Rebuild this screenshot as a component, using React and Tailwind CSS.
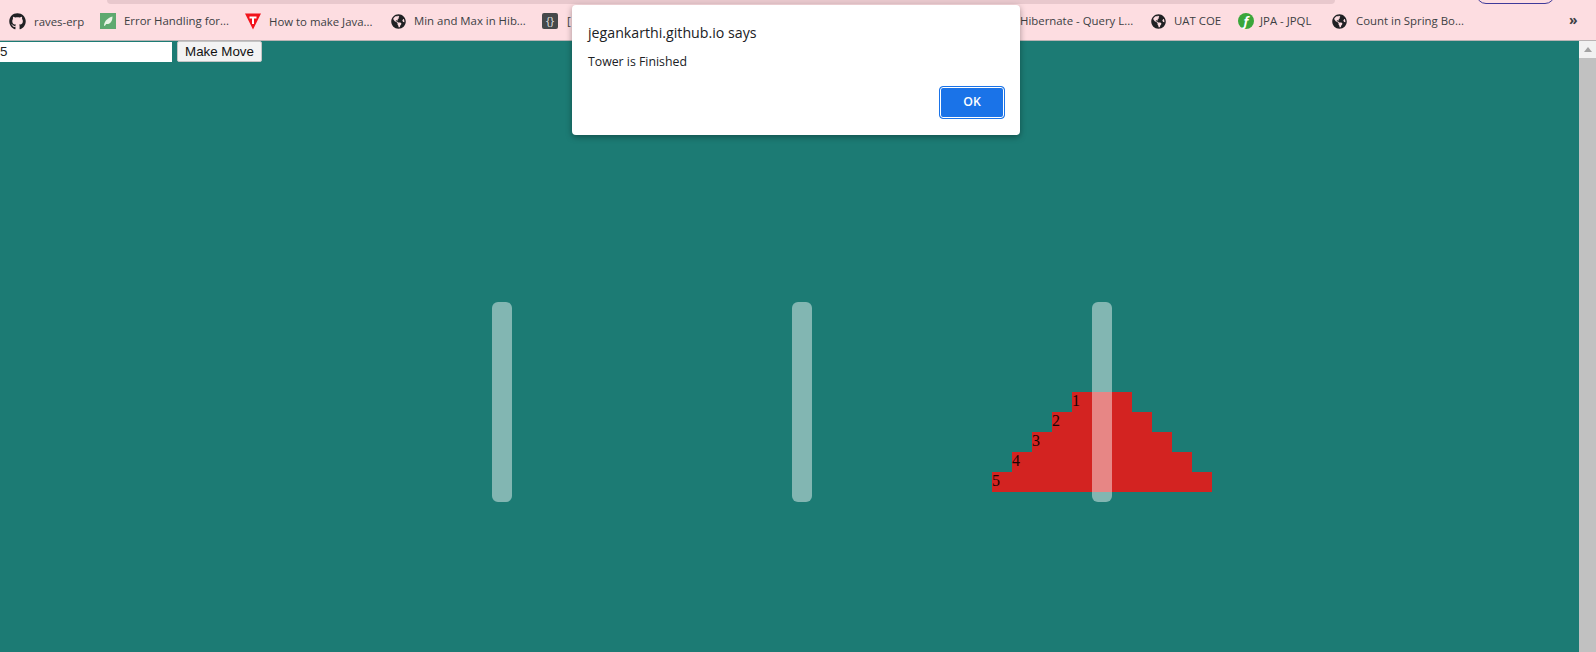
import React from "react";
import { FaGithub, FaGlobeAmericas } from "react-icons/fa";

function LeafIcon() {
  return (
    <svg width="16" height="16" viewBox="0 0 16 16" className="shrink-0">
      <rect width="16" height="16" fill="#5fa96f" />
      <path d="M4 12.5 C4.5 7.5 8 5 12.5 3.5 C12.5 8 10.5 11.5 6.2 11 L4.8 13 Z" fill="#eaf5e6" />
    </svg>
  );
}

function TriIcon() {
  return (
    <svg width="16" height="17" viewBox="0 0 16 17" className="shrink-0">
      <path d="M0 0.5 H16 L8 16.5 Z" fill="#f2141c" />
      <path d="M4.5 3.5 H11.5 V5.5 H9 V11 H7 V5.5 H4.5 Z" fill="#fff" />
    </svg>
  );
}

function Braces() {
  return (
    <span className="w-4 h-4 shrink-0 rounded-[2px] bg-[#46484a] text-[#e4e4e4] text-[11px] leading-4 text-center">
      {"{}"}
    </span>
  );
}

function FIcon() {
  return (
    <span className="w-4 h-4 shrink-0 rounded-full bg-[#3aa63a] text-white text-[13px] font-bold italic leading-4 text-center">
      f
    </span>
  );
}

const globe = <FaGlobeAmericas className="w-[15px] h-[15px] shrink-0 text-[#202124]" />;

const BOOKMARKS = [
  { w: "w-[91px]", icon: <FaGithub className="w-[17px] h-[17px] shrink-0 text-[#202124]" />, label: "raves-erp", gap: "gap-2" },
  { w: "w-[145px]", icon: <LeafIcon />, label: "Error Handling for..." },
  { w: "w-[146px]", icon: <TriIcon />, label: "How to make Java..." },
  { w: "w-[151px]", icon: globe, label: "Min and Max in Hib...", gap: "gap-2" },
  { w: "w-[478px]", icon: <Braces />, label: "[", gap: "gap-[9px]" },
  { w: "w-[131px]", icon: null, label: "Hibernate - Query L..." },
  { w: "w-[87px]", icon: globe, label: "UAT COE", gap: "gap-2" },
  { w: "w-[94px]", icon: <FIcon />, label: "JPA - JPQL", gap: "gap-[6px]" },
  { w: "w-[220px]", icon: globe, label: "Count in Spring Bo...", gap: "gap-[9px]" },
];

// disk sizes, smallest on top
const DISKS = [
  { n: 1, w: "w-[60px]" },
  { n: 2, w: "w-[100px]" },
  { n: 3, w: "w-[140px]" },
  { n: 4, w: "w-[180px]" },
  { n: 5, w: "w-[220px]" },
];

function Tower({ disks }) {
  return (
    <div className="relative w-[300px] h-[200px] flex flex-col items-center justify-end pb-[10px]">
      {disks.map((d) => (
        <div key={d.n} className={`${d.w} h-5 bg-[#d32321] text-[#1a0505] text-[16px] leading-[18px] font-['Liberation_Serif',serif]`}>
          {d.n}
        </div>
      ))}
      <div className="absolute top-0 bottom-0 left-1/2 -translate-x-1/2 w-5 rounded-[6px] bg-white/45" />
    </div>
  );
}

export default function App() {
  return (
    <div className="relative w-[1596px] h-[652px] overflow-hidden flex flex-col bg-[#1c7b74] font-['Open_Sans',sans-serif]">
      {/* browser bookmarks bar */}
      <div className="relative h-[41px] shrink-0 bg-[#fddde1] border-b border-[#b9b3b4] flex items-start pl-[9px] pt-[13px] text-[11.4px] leading-4 text-[#3c4043]">
        <div className="absolute left-[107px] top-0 w-[1228px] h-1 rounded-b-lg bg-[#e8c8cd]" />
        <div className="absolute left-[1476px] -top-4 w-[79px] h-5 rounded-full border border-[#3f3a9a] bg-[#fddde1]" />
        {BOOKMARKS.map((b) => (
          <div key={b.label} className={`${b.w} shrink-0 flex items-center ${b.gap || "gap-[8px]"} whitespace-nowrap`}>
            {b.icon}
            <span>{b.label}</span>
          </div>
        ))}
        <span className="absolute left-[1569px] top-[12px] text-[14px] font-bold text-[#3c4043]">»</span>
      </div>

      {/* page */}
      <div className="flex-1 flex min-h-0">
        <div className="flex-1 min-w-0">
          <div className="flex items-center h-[21px] font-['Liberation_Sans',sans-serif] text-[13.33px]">
            <input
              readOnly
              value="5"
              className="w-[172px] h-5 bg-white text-[#222] pl-0 outline-none text-[13.33px]"
            />
            <button className="ml-[5px] w-[85px] h-[21px] bg-[#f3f3f3] border border-[#c4c4c4] rounded-[2px] text-[#111]">
              Make Move
            </button>
          </div>
          <div className="flex pl-[352px] pt-[240px]">
            <Tower disks={[]} />
            <Tower disks={[]} />
            <Tower disks={DISKS} />
          </div>
        </div>

        {/* scrollbar */}
        <div className="w-[17px] shrink-0 bg-[#f1f1f1] flex flex-col items-center">
          <div className="h-[17px] flex items-center justify-center shrink-0">
            <div className="w-0 h-0 border-x-[4px] border-x-transparent border-b-[5px] border-b-[#a3a3a3]" />
          </div>
          <div className="flex-1 w-full bg-[#c1c1c1]" />
        </div>
      </div>

      {/* alert dialog */}
      <div className="absolute left-[572px] top-[5px] w-[448px] h-[130px] bg-white rounded-[4px] shadow-[0_2px_6px_rgba(0,0,0,0.35)] pl-4 pr-[15px] pt-[18px] flex flex-col">
        <div className="text-[14.2px] leading-5 text-[#202124]">jegankarthi.github.io says</div>
        <div className="mt-[10px] text-[12.3px] leading-[18px] text-[#202124]">Tower is Finished</div>
        <div className="mt-[15px] flex justify-end">
          <button className="w-[66px] h-[33px] rounded-[4px] bg-[#1a73e8] border border-[#1a73e8] text-white text-[12.3px] font-semibold shadow-[inset_0_0_0_1px_#ffffff,inset_0_0_0_2px_#1a73e8]">
            OK
          </button>
        </div>
      </div>
    </div>
  );
}
